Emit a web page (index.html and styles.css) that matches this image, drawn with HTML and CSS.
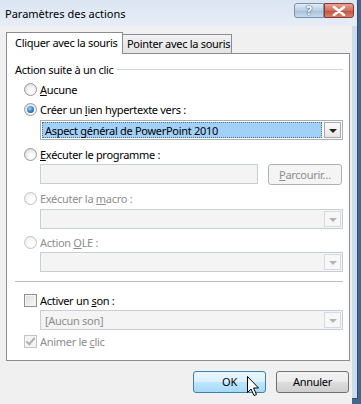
FILE: index.html
```html
<!DOCTYPE html>
<html lang="fr">
<head>
  <meta charset="UTF-8">
  <title>Paramètres des actions</title>
  <link rel="stylesheet" href="styles.css">
</head>
<body>
  <div class="window">
    <div class="titlebar">
      <span class="title">Paramètres des actions</span>
      <div class="caption-buttons">
        <span class="cap-btn help">?</span>
        <span class="cap-btn close">
          <svg width="14" height="10" viewBox="0 0 14 10"><path d="M2 1 L12 9 M12 1 L2 9" stroke="#fff" stroke-width="2.6" stroke-linecap="round"/></svg>
        </span>
      </div>
    </div>

    <div class="client">
      <div class="tabs">
        <div class="tab active">Cliquer avec la souris</div>
        <div class="tab">Pointer avec la souris</div>
      </div>

      <div class="panel">
        <div class="legend"><span>Action suite à un clic</span><span class="rule"></span></div>

        <div class="option"><span class="radio"></span><span><u>A</u>ucune</span></div>
        <div class="option"><span class="radio checked"></span><span>Créer un <u>l</u>ien hypertexte vers :</span></div>
        <div class="combo focus">
          <div class="combo-value"><span class="selected">Aspect général de PowerPoint 2010</span></div>
          <div class="combo-arrow"><span class="tri"></span></div>
        </div>

        <div class="option gap"><span class="radio"></span><span><u>E</u>xécuter le programme :</span></div>
        <div class="field-row">
          <div class="field"></div>
          <div class="small-btn"><u>P</u>arcourir…</div>
        </div>

        <div class="option disabled gap-s"><span class="radio"></span><span>Exécuter la <u>m</u>acro :</span></div>
        <div class="combo disabled">
          <div class="combo-value"></div>
          <div class="combo-arrow"><span class="tri"></span></div>
        </div>

        <div class="option disabled gap-s"><span class="radio"></span><span>Action <u>O</u>LE :</span></div>
        <div class="combo disabled tight">
          <div class="combo-value"></div>
          <div class="combo-arrow"><span class="tri"></span></div>
        </div>

        <div class="group-end"></div>

        <div class="option sound"><span class="check"></span><span>Activer un <u>s</u>on :</span></div>
        <div class="combo disabled tight">
          <div class="combo-value">[Aucun son]</div>
          <div class="combo-arrow"><span class="tri"></span></div>
        </div>
        <div class="option disabled animate"><span class="check checked"></span><span>Animer le <u>c</u>lic</span></div>
      </div>

      <div class="buttons">
        <div class="button default">OK
          <svg class="cursor" width="14" height="22" viewBox="0 0 14 22"><path d="M1.5 1.5 L1.5 17.5 L5 14 L8 20.5 L10.5 19.5 L7.5 13 L12.5 13 Z" fill="#fff" stroke="#000" stroke-width="1" stroke-linejoin="round"/></svg>
        </div>
        <div class="button">Annuler</div>
      </div>
    </div>
  </div>
</body>
</html>
```

FILE: styles.css
```css
html, body {
  margin: 0;
  padding: 0;
  background: #3f6790;
}

body {
  width: 361px;
  height: 404px;
  overflow: hidden;
  font-family: 'Noto Sans', 'Open Sans', sans-serif;
  font-size: 11px;
  letter-spacing: -0.3px;
  color: #000;
}

.window {
  width: 357px;
  height: 398px;
  background: #cddcec;
  border-right: 1px solid #2f4f70;
  border-bottom: 1px solid #2f4f70;
}

.titlebar {
  height: 26px;
  display: flex;
  justify-content: space-between;
  background: linear-gradient(to bottom, #dbe6f2, #e6edf6);
  padding-left: 5px;
}

.title {
  font-size: 11px;
  letter-spacing: 0;
  line-height: 27px;
}

.caption-buttons {
  display: flex;
  padding-top: 3px;
  padding-right: 3px;
}

.cap-btn {
  width: 30px;
  height: 15px;
  border: 1px solid #7891ad;
  box-sizing: border-box;
  display: flex;
  align-items: center;
  justify-content: center;
}

.help {
  border-radius: 3px 0 0 3px;
  background: linear-gradient(to bottom, #e4edf7, #b9cde3 50%, #a7c0dc 51%, #c8daee);
  color: #fff;
  font-weight: bold;
  font-size: 12px;
  text-shadow: 0 0 2px #31527a, 0 0 1px #31527a;
}

.close {
  border-color: #8a3a33;
  border-radius: 0 3px 3px 0;
  background: linear-gradient(to bottom, #e7a393, #d0705e 50%, #c0503c 51%, #d7806c);
}

.client {
  width: 352px;
  height: 372px;
  background: #f0f0f0;
  padding-top: 6px;
}

.tabs {
  display: flex;
  align-items: flex-end;
  padding-left: 6px;
  height: 21px;
  position: relative;
  z-index: 1;
}

.tab {
  height: 19px;
  line-height: 18px;
  padding: 0 4px;
  width: 110px;
  box-sizing: border-box;
  border: 1px solid #898c95;
  border-bottom: none;
  background: linear-gradient(to bottom, #f2f2f2, #e3e3e3);
  margin-left: -1px;
  white-space: nowrap;
}

.tab.active {
  width: 117px;
  height: 22px;
  margin-left: 0;
  margin-bottom: -1px;
  line-height: 20px;
  padding-left: 8px;
  background: #fff;
}

.panel {
  margin-left: 6px;
  width: 344px;
  box-sizing: border-box;
  border: 1px solid #898c95;
  background: #fff;
  padding: 7px 6px 11px 8px;
}

.legend {
  display: flex;
  align-items: center;
  height: 16px;
}

.legend .rule {
  flex: 1;
  height: 1px;
  margin-left: 3px;
  background: #d0d5da;
}

.option {
  display: flex;
  align-items: center;
  height: 16px;
  margin-top: 4px;
  padding-left: 9px;
  white-space: nowrap;
}

.option.gap {
  margin-top: 6px;
}

.option.gap-s {
  margin-top: 5px;
}

.option.disabled {
  color: #8d8d8d;
}

.radio {
  width: 13px;
  height: 13px;
  box-sizing: border-box;
  border-radius: 50%;
  border: 1px solid #9a9a9a;
  background: radial-gradient(circle at 60% 65%, #ffffff 20%, #dcdcdc 80%);
  margin-right: 3px;
  flex: none;
  display: flex;
  align-items: center;
  justify-content: center;
}

.radio.checked::after {
  content: "";
  width: 7px;
  height: 7px;
  border-radius: 50%;
  background: radial-gradient(circle at 40% 35%, #9fd5f7, #2a77b8 60%, #1a4f86);
}

.disabled .radio {
  border-color: #c4c4c4;
  background: radial-gradient(circle at 60% 65%, #ffffff 20%, #ececec 80%);
}

.check {
  width: 13px;
  height: 13px;
  box-sizing: border-box;
  border: 1px solid #8f8f8f;
  background: linear-gradient(135deg, #dcdcdc, #fafafa);
  box-shadow: inset 0 0 0 1px #f4f4f4;
  margin-right: 3px;
  flex: none;
  position: relative;
}

.disabled .check {
  border-color: #c4c4c4;
  background: #f4f4f4;
}

.check.checked::after {
  content: "";
  position: absolute;
  left: 3px;
  top: 0px;
  width: 3px;
  height: 7px;
  border-right: 2px solid #b0b0b0;
  border-bottom: 2px solid #b0b0b0;
  transform: rotate(40deg);
}

.combo {
  display: flex;
  margin-left: 25px;
  margin-top: 3px;
  height: 20px;
  box-sizing: border-box;
  border: 1px solid #a7adb5;
  background: #fff;
}

.combo.tight {
  margin-top: 2px;
}

.combo-value {
  flex: 1;
  padding: 1px 2px;
  display: flex;
  align-items: center;
}

.combo.focus .combo-value {
  padding: 1px;
}

.selected {
  display: block;
  width: 100%;
  height: 16px;
  line-height: 15px;
  padding-left: 2px;
  box-sizing: border-box;
  background: #a3d0f7;
  border: 1px dotted #4a6f95;
}

.combo-arrow {
  width: 17px;
  box-sizing: border-box;
  border: 1px solid #a7a7a7;
  margin: 1px;
  background: linear-gradient(to bottom, #fbfbfb, #e6e6e6);
  display: flex;
  align-items: center;
  justify-content: center;
}

.tri {
  width: 0;
  height: 0;
  border-left: 4px solid transparent;
  border-right: 4px solid transparent;
  border-top: 4px solid #222;
  margin-top: 1px;
}

.combo.disabled {
  border-color: #c5cfda;
  background: #f4f4f4;
  color: #8d8d8d;
}

.combo.disabled .combo-value {
  padding-left: 4px;
}

.combo.disabled .combo-arrow {
  border-color: #d4dbe2;
  background: #f7f7f7;
}

.combo.disabled .tri {
  border-top-color: #b4b4b4;
}

.field-row {
  display: flex;
  margin-top: 2px;
  margin-left: 25px;
  height: 21px;
}

.field {
  width: 218px;
  height: 20px;
  box-sizing: border-box;
  border: 1px solid #c5cfda;
  background: #f4f4f4;
}

.small-btn {
  margin-left: 10px;
  width: 74px;
  height: 21px;
  box-sizing: border-box;
  border: 1px solid #adb2b5;
  border-radius: 3px;
  background: #f4f4f4;
  color: #8d8d8d;
  text-align: center;
  line-height: 19px;
}

.group-end {
  height: 1px;
  margin-top: 9px;
  background: #b8bec4;
}

.option.sound {
  margin-top: 10px;
}

.option.animate {
  margin-top: 3px;
}

.buttons {
  display: flex;
  justify-content: flex-end;
  padding-right: 3px;
  margin-top: 10px;
}

.button {
  width: 73px;
  height: 22px;
  box-sizing: border-box;
  border: 1px solid #707070;
  border-radius: 3px;
  background: linear-gradient(to bottom, #f2f2f2, #ebebeb 50%, #dddddd 51%, #cfcfcf);
  text-align: center;
  line-height: 20px;
  margin-left: 10px;
  position: relative;
}

.button.default {
  border-color: #3c7fb1;
  background: linear-gradient(to bottom, #eaf6fd, #d9f0fc 50%, #bee6fd 51%, #a7d9f5);
}

.cursor {
  position: absolute;
  left: 52px;
  top: 3px;
}
```
